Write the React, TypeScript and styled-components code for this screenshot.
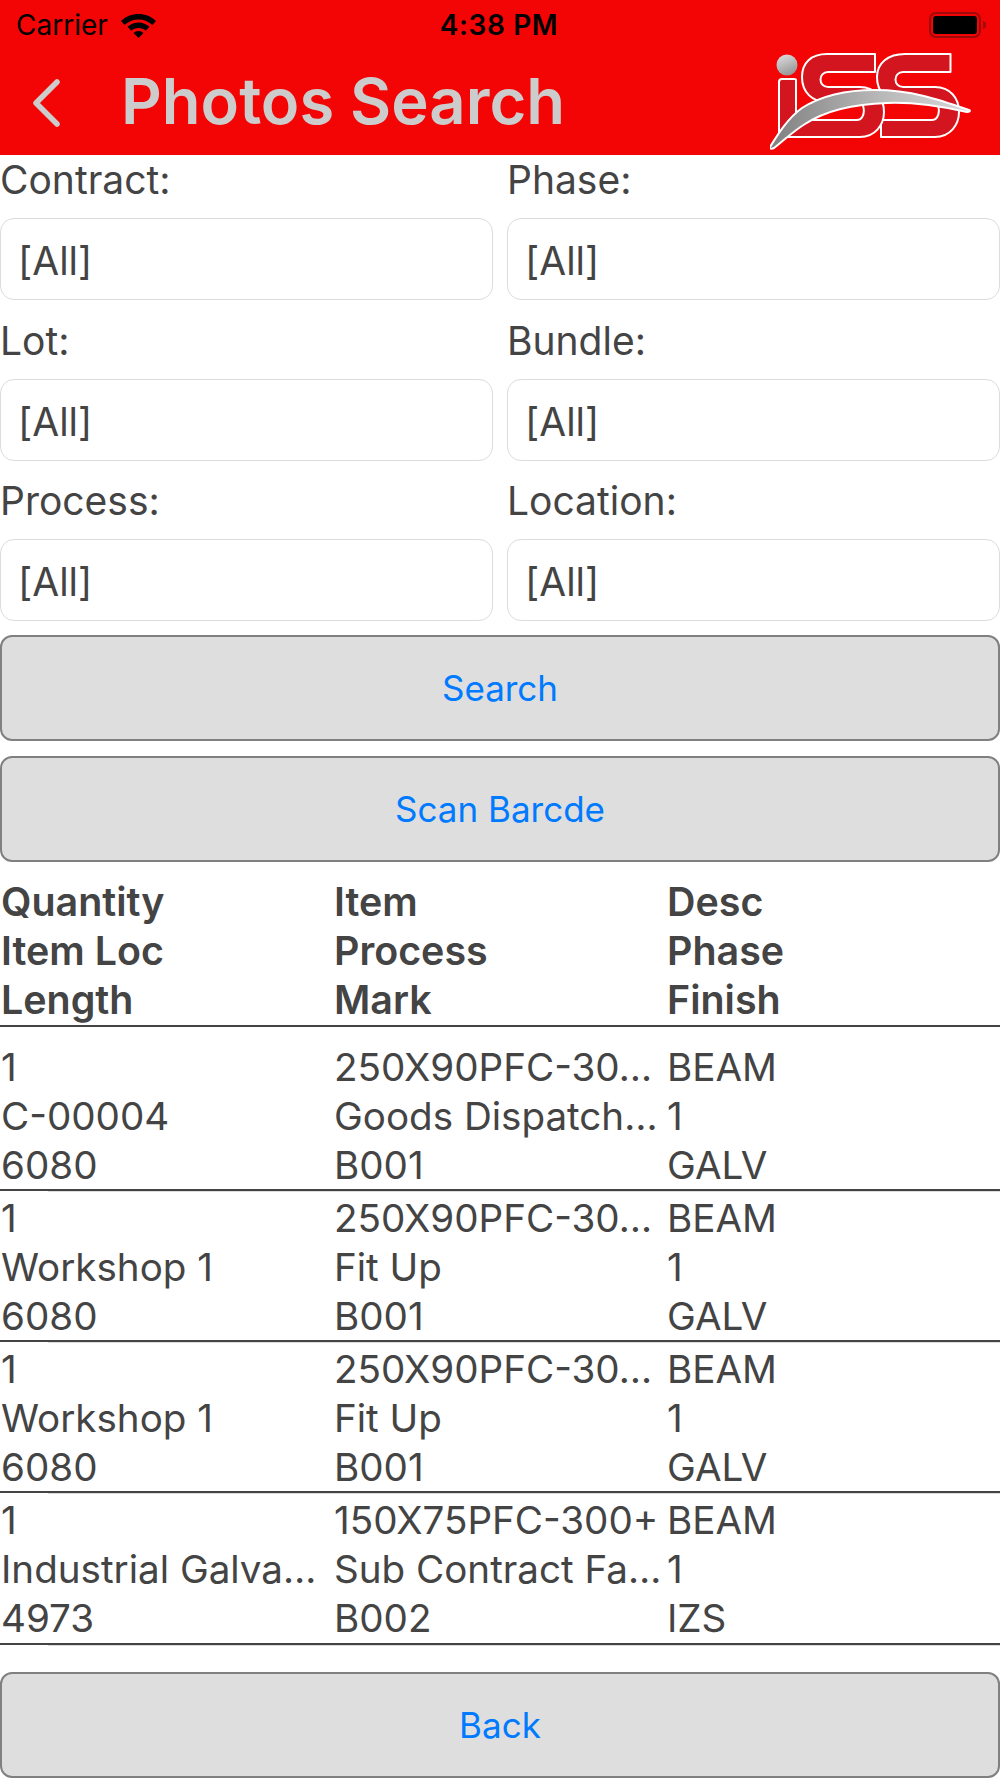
import React from "react";
import styled, { createGlobalStyle } from "styled-components";

const Global = createGlobalStyle`
  html, body { margin: 0; padding: 0; background: #fff; }
  body { font-family: Inter, "Liberation Sans", sans-serif; color: #444; }
`;

const Page = styled.div`
  width: 1000px;
  height: 1778px;
  display: flex;
  flex-direction: column;
  overflow: hidden;
  background: #fff;
`;

const Header = styled.header`
  height: 155px;
  flex: none;
  background: #f40505;
  display: flex;
  flex-direction: column;
`;

const StatusBar = styled.div`
  height: 50px;
  flex: none;
  display: grid;
  grid-template-columns: 1fr auto 1fr;
  align-items: center;
  padding: 0 13px 0 16px;
  color: #000;
  font-size: 28px;
`;

const Carrier = styled.div`
  display: flex;
  align-items: center;
  gap: 12px;
`;

const Clock = styled.div`
  font-weight: 600;
  font-size: 28px;
  letter-spacing: 0.6px;
  margin-right: 5px;
`;

const Battery = styled.svg`
  justify-self: end;
`;

const NavBar = styled.div`
  flex: 1;
  display: flex;
  align-items: flex-start;
  color: #ccc;
`;

const BackChevron = styled.svg`
  flex: none;
  margin: 29px 0 0 31px;
`;

const Title = styled.h1`
  margin: 13px 0 0 60px;
  font-size: 63.3px;
  line-height: 76px;
  font-weight: 600;
  flex: 1;
  white-space: nowrap;
`;

const Logo = styled.svg`
  flex: none;
  margin: 0 25px 0 0;
`;

const Fields = styled.section`
  display: grid;
  grid-template-columns: 493px 493px;
  column-gap: 14px;
  row-gap: 15.5px;
`;

const Field = styled.div`
  display: flex;
  flex-direction: column;
`;

const Label = styled.label`
  height: 63px;
  font-size: 39px;
  line-height: 49px;
`;

const Select = styled.div`
  height: 82px;
  box-sizing: border-box;
  border: 1px solid #dcdcdc;
  border-radius: 14px;
  padding: 3px 0 0 17px;
  display: flex;
  align-items: center;
  font-size: 39px;
`;

const Button = styled.button<{ $mt: number }>`
  display: block;
  flex: none;
  width: 100%;
  height: 106px;
  margin: ${(p) => p.$mt}px 0 0;
  padding: 0;
  box-sizing: border-box;
  background: #dedede;
  border: 2px solid #808080;
  border-radius: 12px;
  color: #007aff;
  font-family: inherit;
  font-size: 35px;
`;

const Grid = styled.div`
  display: grid;
  grid-template-columns: 333px 333px 1fr;
  padding-left: 1px;
  font-size: 38.6px;
  line-height: 49px;
  white-space: nowrap;
`;

const TableHead = styled(Grid)`
  margin-top: 16px;
  height: 147px;
  flex: none;
  font-size: 39.4px;
  font-weight: 600;
  border-bottom: 2px solid #444;
`;

const Rows = styled.div`
  height: 629px;
  flex: none;
  padding-top: 14.5px;
  box-sizing: border-box;
  overflow: hidden;
`;

const Row = styled(Grid)`
  position: relative;
  height: 149.3px;
  margin-bottom: 2px;
  box-sizing: border-box;
  border-bottom: 2px solid #444;

  &::after {
    content: "";
    position: absolute;
    left: 48px;
    right: 0;
    top: 100%;
    margin-top: 2px;
    height: 1px;
    background: #dcdcdc;
  }
`;

const Cell = styled.div`
  margin-top: 1px;
`;

const Line = styled.div``;

const rows = [
  ["1", "C-00004", "6080", "250X90PFC-30…", "Goods Dispatch…", "B001", "BEAM", "1", "GALV"],
  ["1", "Workshop 1", "6080", "250X90PFC-30…", "Fit Up", "B001", "BEAM", "1", "GALV"],
  ["1", "Workshop 1", "6080", "250X90PFC-30…", "Fit Up", "B001", "BEAM", "1", "GALV"],
  ["1", "Industrial Galva…", "4973", "150X75PFC-300+", "Sub Contract Fa…", "B002", "BEAM", "1", "IZS"],
  ["1", "", "", "150X75PFC-300+", "", "", "BEAM", "", ""],
];

const Triple = ({ a, b, c }: { a: string; b: string; c: string }) => (
  <Cell>
    <Line>{a}</Line>
    <Line>{b}</Line>
    <Line>{c}</Line>
  </Cell>
);

const HeadCell = styled.div``;

const HeadTriple = ({ a, b, c }: { a: string; b: string; c: string }) => (
  <HeadCell>
    <Line>{a}</Line>
    <Line>{b}</Line>
    <Line>{c}</Line>
  </HeadCell>
);

const fields = ["Contract:", "Phase:", "Lot:", "Bundle:", "Process:", "Location:"];

export default function App() {
  return (
    <Page>
      <Global />
      <Header>
        <StatusBar>
          <Carrier>
            Carrier
            <svg width="37" height="26" viewBox="0 0 37 26">
              <path d="M18.5 2C11.8 2 5.7 4.6 1 9l3.6 4C8.2 9.500 13.100 7.500 18.500 7.500S28.800 9.500 32.400 13L36 9C31.300 4.600 25.200 2 18.500 2z" fill="#000" />
              <path d="M18.500 10.500c-4.200 0-8 1.600-10.900 4.300l3.600 4c1.900-1.800 4.500-2.800 7.300-2.800s5.400 1 7.300 2.800l3.600-4c-2.900-2.700-6.700-4.300-10.900-4.300z" fill="#000" />
              <path d="M18.500 19c-2 0-3.700.7-5 2l5 5 5-5c-1.300-1.300-3-2-5-2z" fill="#000" />
            </svg>
          </Carrier>
          <Clock>4:38 PM</Clock>
          <Battery width="58" height="26" viewBox="0 0 58 26">
            <rect x="1" y="1" width="50" height="24" rx="6" fill="none" stroke="#a00a0a" strokeWidth="2" />
            <rect x="4" y="4" width="44" height="18" rx="3" fill="#000" />
            <path d="M54 9c2 .6 3 2 3 4s-1 3.400-3 4z" fill="#a00a0a" />
          </Battery>
        </StatusBar>
        <NavBar>
          <BackChevron width="30" height="48" viewBox="0 0 30 48">
            <path d="M26 3 5 24l21 21" fill="none" stroke="#ccc" strokeWidth="5.500" strokeLinecap="round" strokeLinejoin="round" />
          </BackChevron>
          <Title>Photos Search</Title>
          <Logo width="205" height="105" viewBox="70 50 205 105">
            <defs>
              <linearGradient id="ball" x1="0" y1="0" x2="0.4" y2="1">
                <stop offset="0" stopColor="#e2e2e2" />
                <stop offset="1" stopColor="#9a9a9a" />
              </linearGradient>
              <linearGradient id="swoosh" x1="0" y1="0" x2="1" y2="0">
                <stop offset="0" stopColor="#808080" />
                <stop offset="0.55" stopColor="#b8b8b8" />
                <stop offset="1" stopColor="#d8d8d8" />
              </linearGradient>
            </defs>
            <g fill="#d2151f" stroke="#fff" strokeWidth="2" strokeLinejoin="round">
              <path d="M250.500 54H205C188 54 177 63 177 77 177 92 187 102 202 102H233C241 102 241 120 232 120H181V137H235C250 137 259 125 259 112 259 98 250 87 235 87H203C193 87 193 72 203 72H250.500z" />
              <path d="M175 54H127C111 54 102 63 102 77 102 92 112 102 127 102H158C166 102 166 120 157 120H96V80C96 79 95 79 94 79H82C80 79 79 80 79 82V137H160C175 137 184 125 184 112 184 98 175 87 160 87H128C118 87 118 72 128 72H175z" />
            </g>
            <circle cx="87" cy="65" r="10.500" fill="url(#ball)" />
            <path d="M70 147C78 134 88 118 102 108 124 94 150 90 175 90 212 90 240 100 269 110 271 111 269 112 267 112 240 106 210 102 187 103 155 104 125 111 105 124 95 130 84 140 74 148 72 149 69 149 70 147z" fill="url(#swoosh)" stroke="#fff" strokeWidth="2" strokeLinejoin="round" />
          </Logo>
        </NavBar>
      </Header>
      <Fields>
        {fields.map((f) => (
          <Field key={f}>
            <Label>{f}</Label>
            <Select>[All]</Select>
          </Field>
        ))}
      </Fields>
      <Button $mt={14}>Search</Button>
      <Button $mt={15}>Scan Barcde</Button>
      <TableHead>
        <HeadTriple a="Quantity" b="Item Loc" c="Length" />
        <HeadTriple a="Item" b="Process" c="Mark" />
        <HeadTriple a="Desc" b="Phase" c="Finish" />
      </TableHead>
      <Rows>
        {rows.map((r, i) => (
          <Row key={i}>
            <Triple a={r[0]} b={r[1]} c={r[2]} />
            <Triple a={r[3]} b={r[4]} c={r[5]} />
            <Triple a={r[6]} b={r[7]} c={r[8]} />
          </Row>
        ))}
      </Rows>
      <Button $mt={16}>Back</Button>
    </Page>
  );
}
